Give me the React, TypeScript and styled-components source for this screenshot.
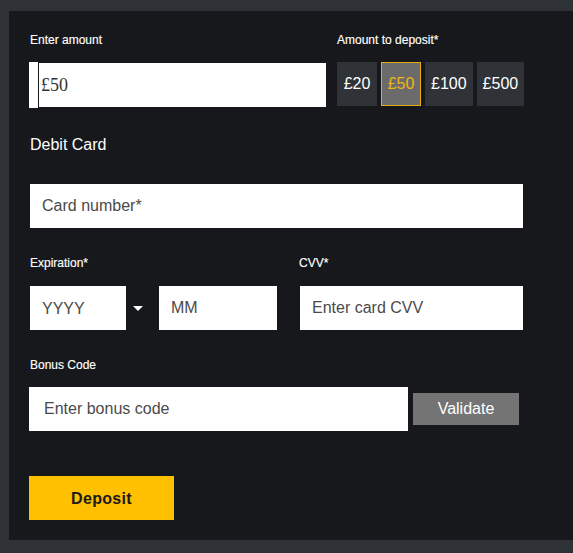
import React, { useState } from "react";
import styled, { createGlobalStyle, css } from "styled-components";

const Global = createGlobalStyle`
  html, body { margin: 0; padding: 0; background: #2e3236; }
  body { font-family: "Liberation Sans", Arial, sans-serif; }
  * { box-sizing: border-box; }
`;

const Page = styled.div`
  padding: 11px 0 13px 9px;
  background: #2e3236;
`;

const Panel = styled.form`
  background: #17181c;
  padding: 22px 0 20px 21px;
  display: flex;
  flex-direction: column;
`;

const Block = styled.div<{ $top?: number }>`
  margin-top: ${(p) => p.$top ?? 0}px;
`;

const Label = styled.div`
  font-size: 12px;
  line-height: 14px;
  color: #ffffff;
  height: 14px;
  -webkit-text-stroke: 0.15px #ffffff;
`;

const Heading = styled.div`
  font-size: 16px;
  line-height: 18px;
  color: #ffffff;
`;

const TopRow = styled.div`
  display: grid;
  grid-template-columns: 296px 190px;
  column-gap: 11px;
`;

const Column = styled.div<{ $gap: number }>`
  display: flex;
  flex-direction: column;
  gap: ${(p) => p.$gap}px;
`;

const AmountField = styled.div`
  display: flex;
  align-items: center;
  gap: 1px;
  margin-left: -1px;
  height: 46px;
`;

const Prefix = styled.span`
  width: 9px;
  height: 46px;
  background: #ffffff;
`;

const AmountInput = styled.input`
  flex: 1;
  height: 44px;
  border: none;
  outline: none;
  background: #ffffff;
  padding: 0 0 0 2px;
  font-family: "Liberation Serif", "Times New Roman", serif;
  font-size: 18px;
  color: #333333;
`;

const Chips = styled.div`
  display: flex;
  gap: 4px;
`;

const Chip = styled.button<{ $active?: boolean }>`
  min-width: 40px;
  height: 44px;
  padding: 0 5px;
  border: 1px solid transparent;
  background: #2f3337;
  color: #ffffff;
  font-family: "Liberation Sans", Arial, sans-serif;
  font-size: 16px;
  cursor: pointer;
  ${(p) =>
    p.$active &&
    css`
      background: #6b6b6b;
      border-color: #e5ad12;
      color: #efb617;
    `}
`;

const TextInput = styled.input<{ $width: number; $pad?: number }>`
  width: ${(p) => p.$width}px;
  height: 44px;
  border: none;
  outline: none;
  background: #ffffff;
  padding: 0 0 0 ${(p) => p.$pad ?? 12}px;
  font-family: "Liberation Sans", Arial, sans-serif;
  font-size: 16px;
  color: #333333;
  &::placeholder {
    color: #4a4a4a;
    opacity: 1;
  }
`;

const ExpRow = styled.div`
  display: grid;
  grid-template-columns: 247px 223px;
  column-gap: 23px;
`;

const ExpFields = styled.div`
  display: flex;
  align-items: center;
`;

const Select = styled.select`
  appearance: none;
  -webkit-appearance: none;
  width: 96px;
  height: 44px;
  border: none;
  outline: none;
  border-radius: 0;
  background: #ffffff;
  padding: 0 0 0 12px;
  font-family: "Liberation Sans", Arial, sans-serif;
  font-size: 16px;
  color: #4a4a4a;
`;

const CaretSlot = styled.span`
  width: 33px;
  height: 44px;
  display: flex;
  align-items: center;
  padding-left: 7px;
`;

const Caret = styled.span`
  width: 0;
  height: 0;
  border-left: 5px solid transparent;
  border-right: 5px solid transparent;
  border-top: 5px solid #ffffff;
  margin-top: 1px;
`;

const CvvLabel = styled(Label)`
  margin-left: -1px;
`;

const BonusRow = styled.div`
  display: flex;
  align-items: center;
  gap: 5px;
  margin-left: -1px;
`;

const ValidateButton = styled.button`
  width: 106px;
  height: 32px;
  border: none;
  background: #747474;
  color: #ffffff;
  font-family: "Liberation Sans", Arial, sans-serif;
  font-size: 16px;
  cursor: pointer;
`;

const DepositButton = styled.button`
  width: 145px;
  height: 44px;
  margin-left: -1px;
  border: none;
  background: #ffc000;
  color: #1a1a1a;
  font-family: "Liberation Sans", Arial, sans-serif;
  font-weight: 700;
  font-size: 16px;
  letter-spacing: 0.3px;
  padding-top: 2px;
  cursor: pointer;
`;

const amounts = ["£20", "£50", "£100", "£500"];

export default function App() {
  const [amount, setAmount] = useState("£50");
  return (
    <>
      <Global />
      <Page>
        <Panel onSubmit={(e) => e.preventDefault()}>
          <TopRow>
            <Column $gap={15}>
              <Label>Enter amount</Label>
              <AmountField>
                <Prefix />
                <AmountInput value={amount} onChange={(e) => setAmount(e.target.value)} />
              </AmountField>
            </Column>
            <Column $gap={15}>
              <Label>Amount to deposit*</Label>
              <Chips>
                {amounts.map((a) => (
                  <Chip key={a} type="button" $active={a === amount} onClick={() => setAmount(a)}>
                    {a}
                  </Chip>
                ))}
              </Chips>
            </Column>
          </TopRow>

          <Block $top={28}>
            <Heading>Debit Card</Heading>
          </Block>

          <Block $top={30}>
            <TextInput $width={493} placeholder="Card number*" />
          </Block>

          <Block $top={28}>
            <ExpRow>
              <Column $gap={16}>
                <Label>Expiration*</Label>
                <ExpFields>
                  <Select defaultValue="">
                    <option value="">YYYY</option>
                    <option value="2025">2025</option>
                    <option value="2026">2026</option>
                  </Select>
                  <CaretSlot>
                    <Caret />
                  </CaretSlot>
                  <TextInput $width={118} placeholder="MM" />
                </ExpFields>
              </Column>
              <Column $gap={16}>
                <CvvLabel>CVV*</CvvLabel>
                <TextInput $width={223} placeholder="Enter card CVV" />
              </Column>
            </ExpRow>
          </Block>

          <Block $top={28}>
            <Column $gap={15}>
              <Label>Bonus Code</Label>
              <BonusRow>
                <TextInput $width={379} $pad={15} placeholder="Enter bonus code" />
                <ValidateButton type="button">Validate</ValidateButton>
              </BonusRow>
            </Column>
          </Block>

          <Block $top={45}>
            <DepositButton type="submit">Deposit</DepositButton>
          </Block>
        </Panel>
      </Page>
    </>
  );
}
